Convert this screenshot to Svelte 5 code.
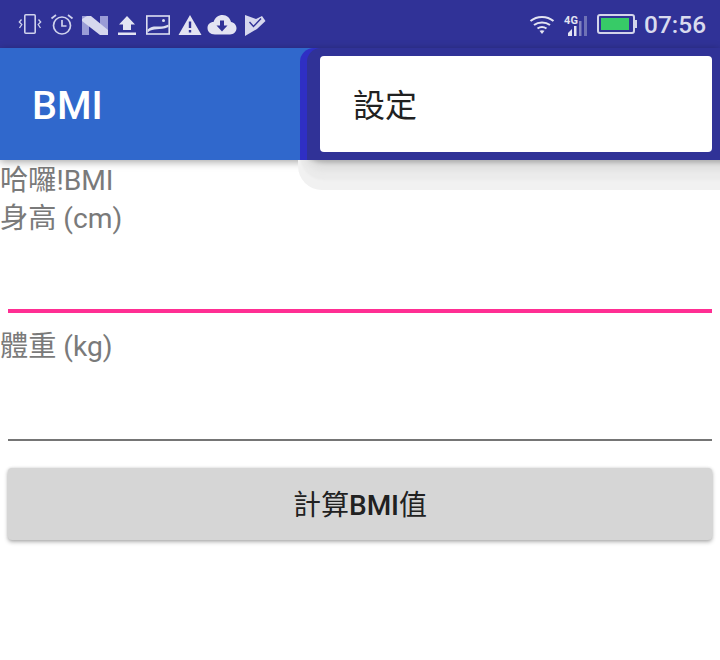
<script lang="ts">
  const title = 'BMI';
</script>

<div class="screen">
  <div class="status-bar">
    <div class="status-left">
      <!-- vibrate -->
      <svg width="24" height="24" viewBox="0 0 24 24" fill="none" stroke="#cfd2ec" stroke-width="1.6">
        <rect x="6.800" y="2.800" width="10.400" height="18.400" rx="1" />
        <path d="M3.500 7.500 L1.300 10 L3.800 12.500 L1.500 16 M20.500 7.500 L22.700 10 L20.200 12.500 L22.500 16" stroke-width="1.300" />
      </svg>
      <!-- alarm -->
      <svg width="24" height="24" viewBox="0 0 24 24" fill="none" stroke="#cfd2ec" stroke-width="1.700">
        <circle cx="12" cy="13.500" r="8.500" />
        <path d="M12 8 V14 H16.500" />
        <path d="M1.500 6.500 L6 3 M22.500 6.500 L18 3" />
      </svg>
      <!-- N -->
      <svg width="26" height="24" viewBox="0 0 26 24">
        <path d="M0 4 H7 V23 H0 Z M18 4 H26 V23 H18 Z" fill="#9a9cd6" />
        <path d="M0 7 L5 4 H9 L26 18 V23 H18 L0 9 Z" fill="#d6d8ee" />
      </svg>
      <!-- upload -->
      <svg width="22" height="24" viewBox="0 0 22 24">
        <path d="M11 4 L19 12.500 H15 V18 H7 V12.500 H3 Z M2 20.500 H20 V23 H2 Z" fill="#e3e4f2" />
      </svg>
      <!-- image -->
      <svg width="24" height="24" viewBox="0 0 24 24" fill="none">
        <rect x="0.800" y="4" width="22.400" height="18" stroke="#dcdef0" stroke-width="1.600" />
        <path d="M1.500 17.500 C8 11.500 13 17 22.500 12.500 V15 C13 19 8 15 1.500 20.500 Z" fill="#dcdef0" />
        <circle cx="17.500" cy="8.500" r="1.500" fill="#dcdef0" />
      </svg>
      <!-- warning -->
      <svg width="24" height="24" viewBox="0 0 24 24">
        <path fill-rule="evenodd" d="M12 3 L23.500 23 H0.500 Z M10.800 9.500 V16 H13.200 V9.500 Z M10.800 18 V20.500 H13.200 V18 Z" fill="#e3e4f2" />
      </svg>
      <!-- cloud download -->
      <svg class="cloud" width="30" height="24" viewBox="0 0 30 24">
        <path fill-rule="evenodd" d="M8 22.500 C3 22.500 0.500 19.500 0.500 16 C0.500 12.500 3 10 6.500 10 C8 5.500 11.500 3 15.500 3 C20 3 23 6 24 10 C27 10.500 29.500 13 29.500 16.300 C29.500 20 26.500 22.500 23 22.500 Z M13 8.500 V13.500 H9.500 L15 19.500 L20.500 13.500 H17 V8.500 Z" fill="#e3e4f2" />
      </svg>
      <!-- flag check -->
      <svg class="flag" width="22" height="24" viewBox="0 0 22 24">
        <path d="M1 3 L12 7 L18 4 L21.500 9 L13 17 L1 24 Z" fill="#d6d8ee" />
        <path d="M5.500 10 L9.500 14.500 L17 6.500" fill="none" stroke="#303297" stroke-width="1.400" />
      </svg>
    </div>
    <div class="status-right">
      <svg class="wifi" width="26" height="24" viewBox="0 0 26 24" fill="none" stroke="#e3e4f2" stroke-width="2">
        <path d="M1.500 9 C8 3.500 18 3.500 24.500 9" />
        <path d="M5 13 C9.500 9.500 16.500 9.500 21 13" />
        <path d="M8.500 16.500 C11.500 14.500 14.500 14.500 17.500 16.500" />
        <path d="M13 22 L10.500 18.800 C12 18 14 18 15.500 18.800 Z" fill="#e3e4f2" stroke="none" />
      </svg>
      <div class="signal">
        <span class="net">4G</span>
        <svg width="26" height="22" viewBox="0 0 26 22">
          <path d="M4 21 V18 L8 14 V21 Z" fill="#e3e4f2" />
          <rect x="10" y="11" width="2.500" height="10" fill="#e3e4f2" />
          <rect x="15" y="6" width="2.500" height="15" fill="#8082bf" />
          <rect x="20" y="1" width="3" height="20" fill="#6f72b6" />
        </svg>
      </div>
      <div class="battery">
        <div class="battery-body"><div class="battery-level"></div></div>
        <div class="battery-tip"></div>
      </div>
      <span class="clock">07:56</span>
    </div>
  </div>

  <div class="toolbar">
    <span class="title">{title}</span>
  </div>

  <div class="content">
    <div class="label">哈囉!BMI</div>
    <div class="label">身高 (cm)</div>
    <div class="field active"></div>
    <div class="label">體重 (kg)</div>
    <div class="field"></div>
    <button class="calc">計算<b>BMI</b>值</button>
  </div>

  <div class="menu-shadow"></div>
  <div class="menu-panel">
    <div class="menu-inner">
      <div class="menu-card">設定</div>
    </div>
  </div>
</div>

<style>
  :global(body) {
    background: #fff;
  }

  .screen {
    position: relative;
    width: 720px;
    height: 660px;
    overflow: hidden;
    background: #fff;
    font-family: Roboto, "Noto Sans CJK TC", sans-serif;
  }

  .status-bar {
    height: 48px;
    background: #303297;
    display: flex;
    align-items: center;
    justify-content: space-between;
    padding: 0 14px 0 18px;
  }

  .status-left {
    display: flex;
    align-items: center;
    gap: 8px;
  }

  .cloud {
    margin-left: -3px;
  }

  .flag {
    margin-left: -1px;
  }

  .status-right {
    display: flex;
    align-items: center;
  }

  .wifi {
    margin-right: 9px;
  }

  .signal {
    position: relative;
    width: 26px;
    height: 24px;
    margin-right: 7px;
  }

  .signal svg {
    position: absolute;
    left: 0;
    top: 3px;
  }

  .net {
    position: absolute;
    left: 0;
    top: 4px;
    font-size: 11px;
    font-weight: 700;
    line-height: 10px;
    color: #e3e4f2;
  }

  .battery {
    display: flex;
    align-items: center;
    margin-right: 7px;
  }

  .battery-body {
    width: 38px;
    height: 20px;
    border: 2px solid #d3d5ea;
    border-radius: 3px;
    padding: 2px 4px 2px 2px;
    box-sizing: border-box;
  }

  .battery-level {
    height: 100%;
    background: #37cb67;
  }

  .battery-tip {
    width: 2px;
    height: 8px;
    background: #d3d5ea;
  }

  .clock {
    font-size: 24.400px;
    font-weight: 500;
    color: #d9dbee;
  }

  .toolbar {
    height: 112px;
    background: #3068cc;
    display: flex;
    align-items: center;
    padding: 3px 0 0 32px;
    box-sizing: border-box;
    box-shadow: 0 2px 8px rgba(0, 0, 0, 0.35);
    position: relative;
  }

  .title {
    font-size: 39.500px;
    font-weight: 500;
    color: #fff;
  }

  .content {
    display: flex;
    flex-direction: column;
    padding-top: 2px;
  }

  .label {
    font-size: 28.200px;
    line-height: 38px;
    color: #7a7a7a;
    height: 38px;
    white-space: nowrap;
  }

  .field {
    height: 75px;
    margin: 0 8px 15px;
    border-bottom: 2px solid #757575;
    box-sizing: border-box;
  }

  .field.active {
    border-bottom: 4px solid #ff2e93;
  }

  .calc {
    margin: 12px 8px 0;
    height: 72px;
    padding: 0 0 2px;
    border: none;
    border-radius: 4px;
    background: #d6d6d6;
    color: #212121;
    font-family: inherit;
    font-size: 28px;
    font-weight: 400;
    box-shadow: 0 2px 4px rgba(0, 0, 0, 0.3), 0 0 3px rgba(0, 0, 0, 0.12);
  }

  .calc b {
    font-weight: 500;
  }

  .menu-shadow {
    position: absolute;
    left: 300px;
    top: 130px;
    width: 440px;
    height: 30px;
    border-radius: 0 0 0 24px;
    clip-path: inset(30px -30px -40px -30px);
    box-shadow:
      0 3px 4px rgba(0, 0, 0, 0.22),
      0 11px 4px #e2e2e2,
      0 20px 2px #ebebeb,
      -2px 30px 0 #f1f1f1;
  }

  .menu-panel {
    position: absolute;
    left: 300px;
    top: 48px;
    width: 420px;
    height: 112px;
    padding-left: 7px;
    box-sizing: border-box;
    background: #2f2fc4;
    border-radius: 14px 0 0 0;
  }

  .menu-inner {
    height: 100%;
    box-sizing: border-box;
    padding: 8px 8px 8px 13px;
    background: #303297;
    border-radius: 14px 0 0 0;
  }

  .menu-card {
    height: 96px;
    background: #fff;
    border-radius: 4px;
    display: flex;
    align-items: center;
    padding: 0 0 3px 33px;
    box-sizing: border-box;
    font-size: 32px;
    color: #212121;
  }
</style>
